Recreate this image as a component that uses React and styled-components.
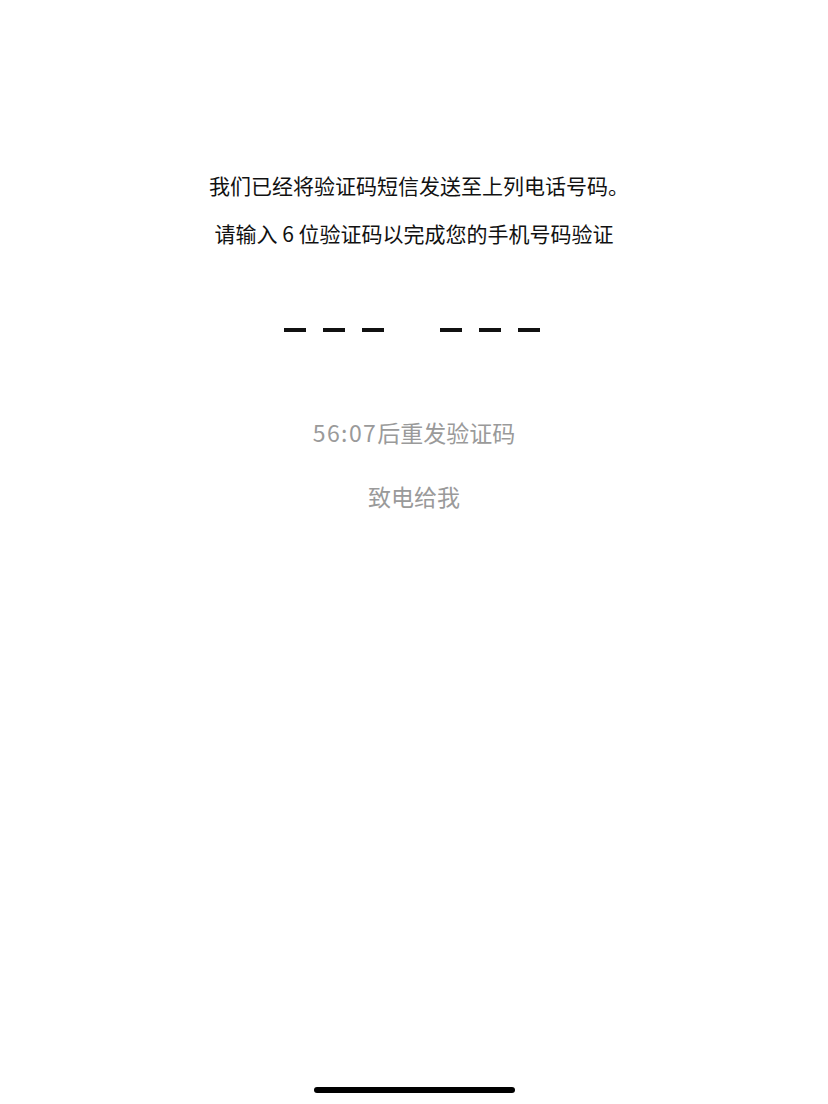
import React from 'react';
import styled, { createGlobalStyle } from 'styled-components';

const GlobalStyle = createGlobalStyle`
    html, body {
        margin: 0;
        padding: 0;
        background: #fff;
    }
    body {
        font-family: "Noto Sans CJK SC", "Noto Sans", sans-serif;
    }
`;

const Screen = styled.div`
    width: 828px;
    height: 1104px;
    display: flex;
    flex-direction: column;
    align-items: center;
    box-sizing: border-box;
    padding-top: 171px;
    padding-bottom: 11px;
`;

const Message = styled.p`
    margin: 0 0 ${(p) => p.gap || 0}px ${(p) => p.shift || 0}px;
    font-size: 21px;
    line-height: 28px;
    color: #111;
    text-align: center;
`;

const CodeRow = styled.div`
    display: flex;
    gap: 56px;
    margin-top: 81px;
    margin-right: 4px;
`;

const CodeGroup = styled.div`
    display: flex;
    gap: 17px;
`;

const Slot = styled.span`
    width: 22px;
    height: 4px;
    background: #111;
`;

const LinkText = styled.div`
    font-size: 23px;
    line-height: 30px;
    color: #9a9a9a;
    margin-top: ${(p) => p.top}px;
`;

const Countdown = styled.span`
    letter-spacing: 1.4px;
`;

const HomeBar = styled.div`
    margin-top: auto;
    width: 201px;
    height: 6px;
    border-radius: 3px;
    background: #000;
`;

export default function App() {
    return (
        <>
            <GlobalStyle />
            <Screen>
                <Message gap={20} shift={10}>我们已经将验证码短信发送至上列电话号码。</Message>
                <Message>请输入 6 位验证码以完成您的手机号码验证</Message>
                <CodeRow>
                    <CodeGroup>
                        <Slot />
                        <Slot />
                        <Slot />
                    </CodeGroup>
                    <CodeGroup>
                        <Slot />
                        <Slot />
                        <Slot />
                    </CodeGroup>
                </CodeRow>
                <LinkText top={85}>
                    <Countdown>56:07</Countdown>后重发验证码
                </LinkText>
                <LinkText top={34}>致电给我</LinkText>
                <HomeBar />
            </Screen>
        </>
    );
}
